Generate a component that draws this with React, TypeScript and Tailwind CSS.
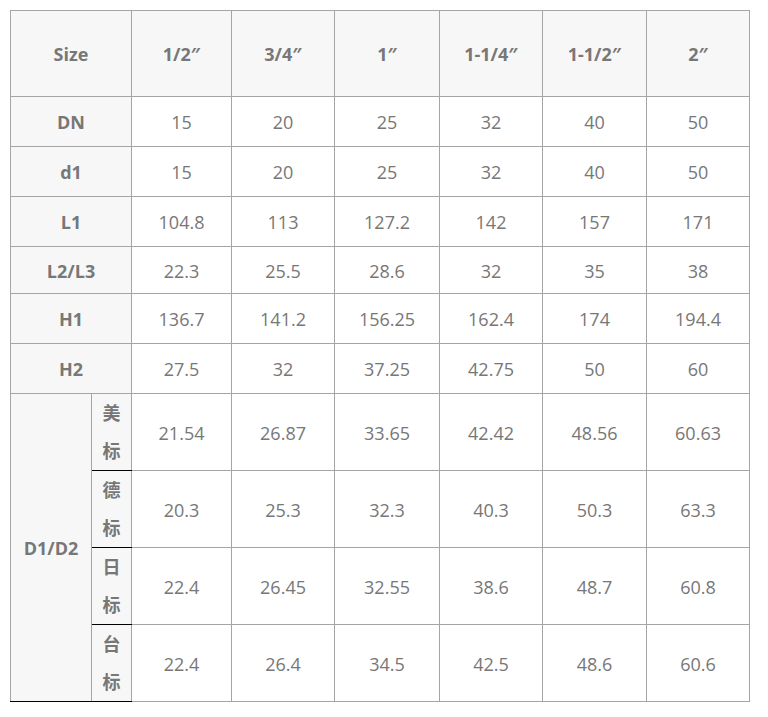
const sizes = ['1/2″', '3/4″', '1″', '1-1/4″', '1-1/2″', '2″'];

const rows: { label: string; values: string[] }[] = [
  { label: 'DN', values: ['15', '20', '25', '32', '40', '50'] },
  { label: 'd1', values: ['15', '20', '25', '32', '40', '50'] },
  { label: 'L1', values: ['104.8', '113', '127.2', '142', '157', '171'] },
  { label: 'L2/L3', values: ['22.3', '25.5', '28.6', '32', '35', '38'] },
  { label: 'H1', values: ['136.7', '141.2', '156.25', '162.4', '174', '194.4'] },
  { label: 'H2', values: ['27.5', '32', '37.25', '42.75', '50', '60'] },
];

const rowHeights = ['h-[50px]', 'h-[50px]', 'h-[50px]', 'h-[47px]', 'h-[50px]', 'h-[50px]'];

const standards: { name: string; values: string[] }[] = [
  { name: '美标', values: ['21.54', '26.87', '33.65', '42.42', '48.56', '60.63'] },
  { name: '德标', values: ['20.3', '25.3', '32.3', '40.3', '50.3', '63.3'] },
  { name: '日标', values: ['22.4', '26.45', '32.55', '38.6', '48.7', '60.8'] },
  { name: '台标', values: ['22.4', '26.4', '34.5', '42.5', '48.6', '60.6'] },
];

const base = 'border border-[#a5a5a5] text-center align-middle';
const cell = `${base} px-0 pt-[2px] pb-0`;
const head = `${cell} bg-[#f7f7f7] font-bold`;
const subHead = `${base} p-0 bg-[#f7f7f7] font-bold border-b-black leading-[38px]`;

export default function App() {
  return (
    <div
      className="min-h-[717px] bg-white p-[10px] text-[18px] text-[#777]"
      style={{ fontFamily: '"Open Sans", "Noto Sans CJK SC", sans-serif' }}
    >
      <table className="table-fixed border-collapse w-[739px]">
        <colgroup>
          <col className="w-[81px]" />
          <col className="w-[40px]" />
          <col className="w-[100px]" />
          <col className="w-[103px]" />
          <col className="w-[105px]" />
          <col className="w-[103px]" />
          <col className="w-[104px]" />
          <col className="w-[103px]" />
        </colgroup>
        <tbody>
          <tr className="h-[86px]">
            <td colSpan={2} className={head}>Size</td>
            {sizes.map((s) => (
              <td key={s} className={head}>{s}</td>
            ))}
          </tr>

          {rows.map((r, i) => (
            <tr key={r.label} className={rowHeights[i]}>
              <td colSpan={2} className={head}>{r.label}</td>
              {r.values.map((v, j) => (
                <td key={j} className={cell}>{v}</td>
              ))}
            </tr>
          ))}

          {standards.map((s, i) => (
            <tr key={s.name} className="h-[77px]">
              {i === 0 && (
                <td rowSpan={4} className={`${head} border-b-black`}>D1/D2</td>
              )}
              <td className={subHead}>
                {s.name.split('').map((ch) => (
                  <div key={ch}>{ch}</div>
                ))}
              </td>
              {s.values.map((v, j) => (
                <td key={j} className={cell}>{v}</td>
              ))}
            </tr>
          ))}
        </tbody>
      </table>
    </div>
  );
}
